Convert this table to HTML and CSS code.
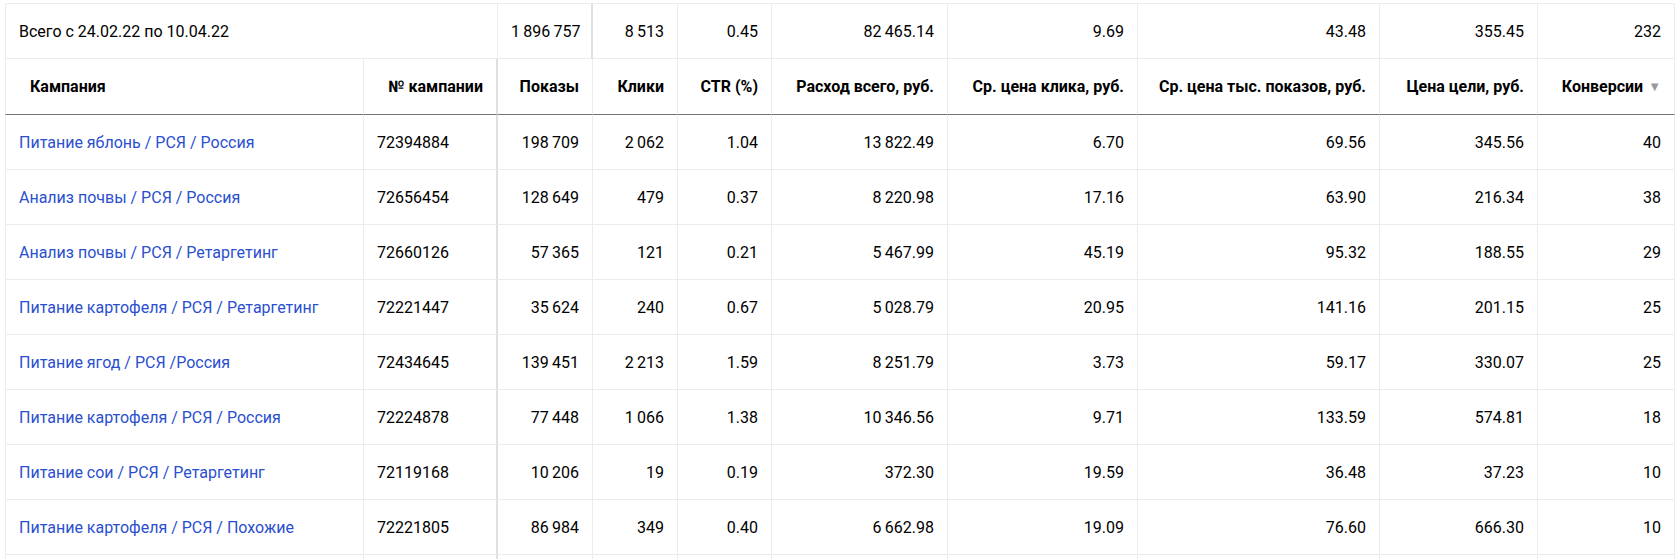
FILE: index.html
```html
<!DOCTYPE html>
<html lang="ru">
<head>
<meta charset="utf-8">
<title>Статистика кампаний</title>
<link rel="stylesheet" href="styles.css">
</head>
<body>
<table class="stats">
  <colgroup>
    <col class="c-name">
    <col class="c-id">
    <col class="c-shows">
    <col class="c-clicks">
    <col class="c-ctr">
    <col class="c-cost">
    <col class="c-cpc">
    <col class="c-cpm">
    <col class="c-goal">
    <col class="c-conv">
  </colgroup>
  <tbody>
    <tr class="total">
      <td class="first" colspan="2">Всего с 24.02.22 по 10.04.22</td>
      <td class="num sep">1&thinsp;896&thinsp;757</td>
      <td class="num">8&thinsp;513</td>
      <td class="num">0.45</td>
      <td class="num">82&thinsp;465.14</td>
      <td class="num">9.69</td>
      <td class="num">43.48</td>
      <td class="num">355.45</td>
      <td class="num">232</td>
    </tr>
    <tr class="head">
      <th class="first name-h">Кампания</th>
      <th class="num sep">№ кампании</th>
      <th class="num">Показы</th>
      <th class="num">Клики</th>
      <th class="num">CTR (%)</th>
      <th class="num">Расход всего, руб.</th>
      <th class="num">Ср. цена клика, руб.</th>
      <th class="num">Ср. цена тыс. показов, руб.</th>
      <th class="num">Цена цели, руб.</th>
      <th class="num">Конверсии<span class="sort">▼</span></th>
    </tr>
    <tr>
      <td class="first"><a class="link" href="#">Питание яблонь / РСЯ / Россия</a></td>
      <td class="sep">72394884</td>
      <td class="num">198&thinsp;709</td>
      <td class="num">2&thinsp;062</td>
      <td class="num">1.04</td>
      <td class="num">13&thinsp;822.49</td>
      <td class="num">6.70</td>
      <td class="num">69.56</td>
      <td class="num">345.56</td>
      <td class="num">40</td>
    </tr>
    <tr>
      <td class="first"><a class="link" href="#">Анализ почвы / РСЯ / Россия</a></td>
      <td class="sep">72656454</td>
      <td class="num">128&thinsp;649</td>
      <td class="num">479</td>
      <td class="num">0.37</td>
      <td class="num">8&thinsp;220.98</td>
      <td class="num">17.16</td>
      <td class="num">63.90</td>
      <td class="num">216.34</td>
      <td class="num">38</td>
    </tr>
    <tr>
      <td class="first"><a class="link" href="#">Анализ почвы / РСЯ / Ретаргетинг</a></td>
      <td class="sep">72660126</td>
      <td class="num">57&thinsp;365</td>
      <td class="num">121</td>
      <td class="num">0.21</td>
      <td class="num">5&thinsp;467.99</td>
      <td class="num">45.19</td>
      <td class="num">95.32</td>
      <td class="num">188.55</td>
      <td class="num">29</td>
    </tr>
    <tr>
      <td class="first"><a class="link" href="#">Питание картофеля / РСЯ / Ретаргетинг</a></td>
      <td class="sep">72221447</td>
      <td class="num">35&thinsp;624</td>
      <td class="num">240</td>
      <td class="num">0.67</td>
      <td class="num">5&thinsp;028.79</td>
      <td class="num">20.95</td>
      <td class="num">141.16</td>
      <td class="num">201.15</td>
      <td class="num">25</td>
    </tr>
    <tr>
      <td class="first"><a class="link" href="#">Питание ягод / РСЯ /Россия</a></td>
      <td class="sep">72434645</td>
      <td class="num">139&thinsp;451</td>
      <td class="num">2&thinsp;213</td>
      <td class="num">1.59</td>
      <td class="num">8&thinsp;251.79</td>
      <td class="num">3.73</td>
      <td class="num">59.17</td>
      <td class="num">330.07</td>
      <td class="num">25</td>
    </tr>
    <tr>
      <td class="first"><a class="link" href="#">Питание картофеля / РСЯ / Россия</a></td>
      <td class="sep">72224878</td>
      <td class="num">77&thinsp;448</td>
      <td class="num">1&thinsp;066</td>
      <td class="num">1.38</td>
      <td class="num">10&thinsp;346.56</td>
      <td class="num">9.71</td>
      <td class="num">133.59</td>
      <td class="num">574.81</td>
      <td class="num">18</td>
    </tr>
    <tr>
      <td class="first"><a class="link" href="#">Питание сои / РСЯ / Ретаргетинг</a></td>
      <td class="sep">72119168</td>
      <td class="num">10&thinsp;206</td>
      <td class="num">19</td>
      <td class="num">0.19</td>
      <td class="num">372.30</td>
      <td class="num">19.59</td>
      <td class="num">36.48</td>
      <td class="num">37.23</td>
      <td class="num">10</td>
    </tr>
    <tr>
      <td class="first"><a class="link" href="#">Питание картофеля / РСЯ / Похожие</a></td>
      <td class="sep">72221805</td>
      <td class="num">86&thinsp;984</td>
      <td class="num">349</td>
      <td class="num">0.40</td>
      <td class="num">6&thinsp;662.98</td>
      <td class="num">19.09</td>
      <td class="num">76.60</td>
      <td class="num">666.30</td>
      <td class="num">10</td>
    </tr>
    <tr>
      <td class="first"></td>
      <td class="sep"></td>
      <td class="num"></td>
      <td class="num"></td>
      <td class="num"></td>
      <td class="num"></td>
      <td class="num"></td>
      <td class="num"></td>
      <td class="num"></td>
      <td class="num"></td>
    </tr>
  </tbody>
</table>
</body>
</html>
```

FILE: styles.css
```css
html, body {
  margin: 0;
  background: #ffffff;
}

body {
  padding: 3px 0 0 5px;
  font-family: Roboto, "Noto Sans", "Liberation Sans", sans-serif;
  font-size: 16px;
  color: #000000;
}

.stats {
  border-collapse: separate;
  border-spacing: 0;
  table-layout: fixed;
  width: 1670px;
}

.c-name { width: 359px; }
.c-id { width: 134px; }
.c-shows { width: 95px; }
.c-clicks { width: 85px; }
.c-ctr { width: 94px; }
.c-cost { width: 176px; }
.c-cpc { width: 190px; }
.c-cpm { width: 242px; }
.c-goal { width: 158px; }
.c-conv { width: 137px; }

.stats td,
.stats th {
  box-sizing: border-box;
  height: 55px;
  padding: 0 13px;
  border-right: 1px solid #ececec;
  border-bottom: 1px solid #ececec;
  white-space: nowrap;
  text-align: left;
  vertical-align: middle;
  font-weight: 400;
}

.stats .first {
  border-left: 1px solid #ececec;
}

.stats .total td {
  height: 56px;
  border-top: 1px solid #ececec;
}

.stats .head th {
  height: 56px;
  font-size: 16px;
  font-weight: 700;
  border-bottom: 1px solid #737373;
}

.stats .name-h {
  padding-left: 24px;
}

.stats .num {
  text-align: right;
}

.stats .sep {
  border-right: 2px solid #e0e0e0;
}

.link {
  color: #2a4fcf;
  text-decoration: none;
}

.sort {
  color: #9a9a9a;
  font-size: 13px;
  margin-left: 5px;
  vertical-align: 1px;
}
```
